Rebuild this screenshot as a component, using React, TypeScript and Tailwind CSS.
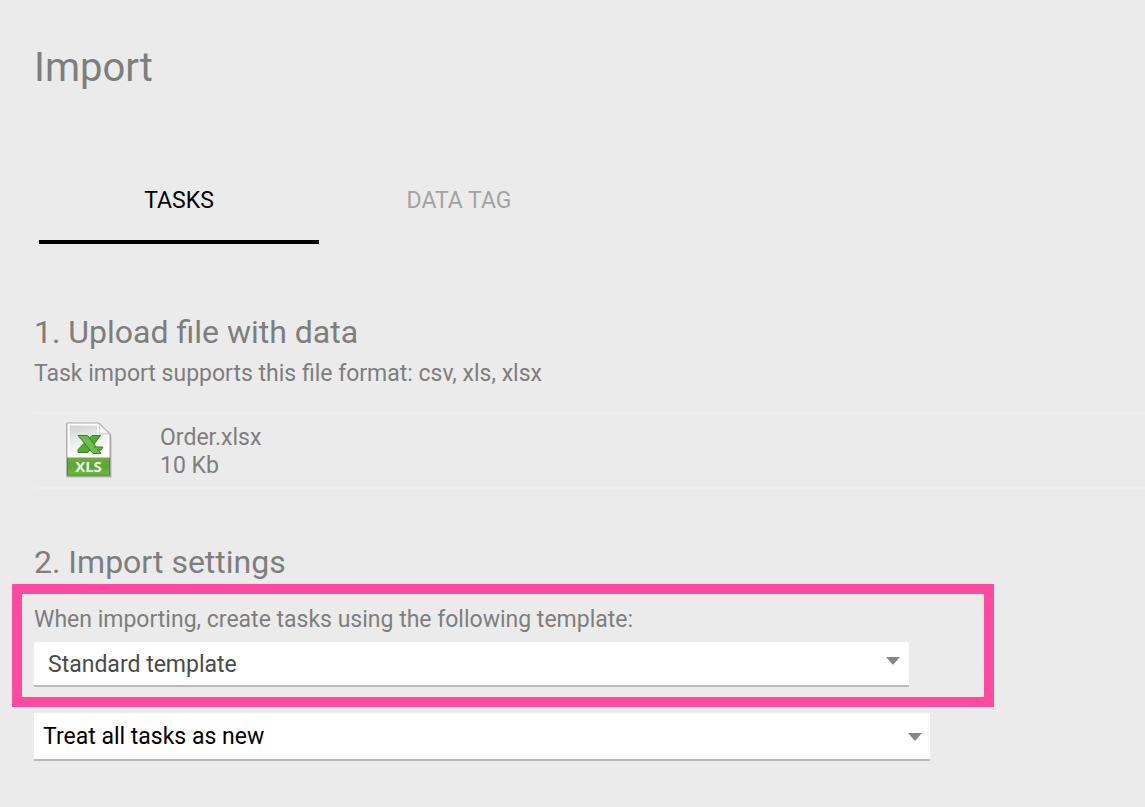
import { useState } from "react";
import clsx from "clsx";

const tabs = [
  { id: "tasks", label: "TASKS" },
  { id: "data-tag", label: "DATA TAG" },
];

function XlsIcon() {
  return (
    <svg viewBox="0 0 50 60" className="h-[60px] w-[50px] shrink-0" aria-hidden="true">
      <defs>
        <linearGradient id="page" x1="0" y1="0" x2="0.3" y2="1">
          <stop offset="0" stopColor="#cfd0d2" />
          <stop offset="0.6" stopColor="#f1f1f2" />
          <stop offset="1" stopColor="#ffffff" />
        </linearGradient>
        <linearGradient id="band" x1="0" y1="0" x2="0" y2="1">
          <stop offset="0" stopColor="#71a944" />
          <stop offset="0.5" stopColor="#5da534" />
          <stop offset="1" stopColor="#6cc03c" />
        </linearGradient>
      </defs>
      <path d="M2 4h34l12 12v42H2z" fill="#000" opacity="0.1" />
      <path d="M2.5 3h33L47 14v43H2.5z" fill="#000" opacity="0.22" />
      <path d="M3 3h32l11 11v41.500H3z" fill="#fff" stroke="#a9a9a9" strokeWidth="1" />
      <path d="M5.500 5.500h28v10h10V38h-38z" fill="url(#page)" />
      <path d="M35 3.500v10.500h10.500z" fill="#f7f7f7" stroke="#b9b9b9" strokeWidth="1" />
      <path d="M34 5v10.500h10" fill="none" stroke="#fff" strokeWidth="1.500" />
      <path d="M3 37.500h43V55.500H3z" fill="url(#band)" />
      <path d="M3.500 38v17h42V38" fill="none" stroke="#479226" />
      {/* spreadsheet mark */}
      <path d="M28 15.500h8.500L24 32.500h-10v-3z" fill="#55a936" stroke="#368520" />
      <path d="M14 15.500h9.500L37 33.500h-8z" fill="#6dbc4c" stroke="#368520" />
      <path d="M30 27h9l-2 3h-4" fill="#65b545" stroke="#368520" />
      <text
        x="24.500"
        y="52"
        textAnchor="middle"
        fill="#edf7e6"
        fontFamily="Open Sans, sans-serif"
        fontSize="15"
        fontWeight="700"
      >
        XLS
      </text>
    </svg>
  );
}

function Caret({ className }: { className: string }) {
  return (
    <svg
      viewBox="0 0 14 8"
      className={clsx("pointer-events-none absolute h-2 w-3.5", className)}
      aria-hidden="true"
    >
      <path d="M0 0h14L7 8z" fill="#858585" />
    </svg>
  );
}

export default function App() {
  const [active, setActive] = useState("tasks");

  return (
    <main className="min-h-screen bg-[#ebebeb] pb-[46px] pt-11 font-['Roboto',sans-serif] text-[23px] leading-7 text-[#7e7e7e]">
      <h1 className="pl-[34px] text-[40px] leading-[48px]">Import</h1>

      <div role="tablist" className="mt-16 flex pl-[39px]">
        {tabs.map((tab) => (
          <button
            key={tab.id}
            type="button"
            role="tab"
            aria-selected={active === tab.id}
            onClick={() => setActive(tab.id)}
            className={clsx(
              "h-[88px] w-[280px] border-b-4 pt-1.5",
              active === tab.id ? "border-black text-black" : "border-transparent text-[#a3a3a3]",
            )}
          >
            {tab.label}
          </button>
        ))}
      </div>

      <section className="mt-[68px] pl-[34px]">
        <h2 className="text-[32px] leading-10">1. Upload file with data</h2>
        <p className="mt-2">Task import supports this file format: csv, xls, xlsx</p>
        <div className="mt-6 flex items-center gap-[46px] border-y-2 border-[#eeeeee] pb-[7px] pl-[30px] pt-1.5">
          <XlsIcon />
          <div className="pt-1">
            <div>Order.xlsx</div>
            <div>10 Kb</div>
          </div>
        </div>
      </section>

      <section className="mt-[53px]">
        <h2 className="pl-[34px] text-[32px] leading-10">2. Import settings</h2>
        <div className="ml-3 mt-0.5 max-w-[982px] border-[10px] border-[#ff4a9e] pb-2.5 pl-3 pr-[75px] pt-3">
          <label htmlFor="template" className="block">
            When importing, create tasks using the following template:
          </label>
          <div className="relative mt-2">
            <select
              id="template"
              className="block h-[45px] w-full appearance-none border-b-2 border-[#b9b9b9] bg-white pl-3.5 pr-10 pt-0.5 text-[#4a4a4a]"
            >
              <option>Standard template</option>
            </select>
            <Caret className="right-[9px] top-[15px]" />
          </div>
        </div>
        <div className="relative ml-[34px] mt-1.5 max-w-[896px]">
          <select
            aria-label="Existing tasks"
            className="block h-12 w-full appearance-none border-b-2 border-[#b9b9b9] bg-white pl-[9px] pr-10 pt-0.5 text-black"
          >
            <option>Treat all tasks as new</option>
          </select>
          <Caret className="right-2 top-5" />
        </div>
      </section>
    </main>
  );
}
